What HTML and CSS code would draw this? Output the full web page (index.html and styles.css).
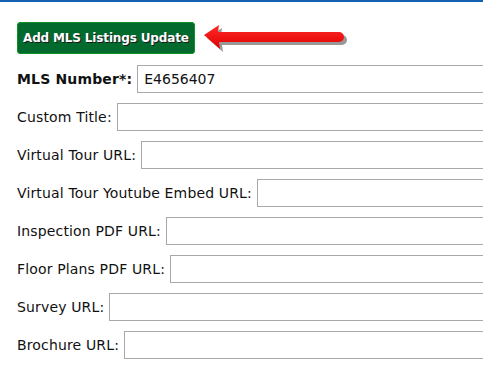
FILE: index.html
```html
<!DOCTYPE html>
<html>
<head>
  <title>Add MLS Listings Update</title>
  <meta name="viewport" content="width=device-width, initial-scale=1.0">
  <link rel="stylesheet" href="styles.css">
</head>
<body>
  <div class="topbar"></div>
  <div class="container">
    <div class="actions">
      <button type="button" class="add-btn">Add MLS Listings Update</button>
      <svg class="arrow" width="150" height="30" viewBox="0 0 150 30">
        <defs>
          <linearGradient id="red" x1="0" y1="0" x2="0" y2="1">
            <stop offset="0" stop-color="#ff2a2a"/>
            <stop offset="1" stop-color="#e00000"/>
          </linearGradient>
        </defs>
        <path d="M3 12 L18 2 L17 9 L138 9 A5 5 0 0 1 138 19 L18 19 L19 26 Z" fill="#444" opacity="0.55" transform="translate(2 2)"/>
        <path d="M2 11 L17 1 L16 8 L137 8 A5 5 0 0 1 137 18 L17 18 L18 25 Z" fill="url(#red)"/>
      </svg>
    </div>
    <form class="mls-form">
      <div class="row">
        <label for="mls" class="strong">MLS Number*:</label>
        <input type="text" id="mls" value="E4656407">
      </div>
      <div class="row">
        <label for="title">Custom Title:</label>
        <input type="text" id="title">
      </div>
      <div class="row">
        <label for="tour">Virtual Tour URL:</label>
        <input type="text" id="tour">
      </div>
      <div class="row">
        <label for="youtube">Virtual Tour Youtube Embed URL:</label>
        <input type="text" id="youtube">
      </div>
      <div class="row">
        <label for="inspection">Inspection PDF URL:</label>
        <input type="text" id="inspection">
      </div>
      <div class="row">
        <label for="floor">Floor Plans PDF URL:</label>
        <input type="text" id="floor">
      </div>
      <div class="row">
        <label for="survey">Survey URL:</label>
        <input type="text" id="survey">
      </div>
      <div class="row">
        <label for="brochure">Brochure URL:</label>
        <input type="text" id="brochure">
      </div>
      <div class="row">
        <label for="feature">Feature On Homepage:</label>
        <select id="feature" class="small-select">
          <option>No</option>
        </select>
      </div>
    </form>
  </div>
</body>
</html>
```

FILE: styles.css
```css
html, body {
  overflow: hidden;
}
body {
  margin: 0;
  padding: 0;
  background-color: #ffffff;
  font-family: "DejaVu Sans", Verdana, sans-serif;
  font-size: 14px;
  letter-spacing: 0.15px;
  color: #111;
}
.topbar {
  height: 2px;
  background-color: #1560b0;
}
.container {
  padding: 20px 0 0 17px;
}
.actions {
  display: flex;
  align-items: center;
  gap: 7px;
  margin-bottom: 11px;
}
.add-btn {
  height: 32px;
  padding: 0 5px;
  background-color: #036a2e;
  border: 1px solid #109025;
  border-radius: 3px;
  color: #ffffff;
  font-family: "DejaVu Sans", Verdana, sans-serif;
  font-weight: bold;
  font-size: 12px;
  letter-spacing: -0.15px;
  text-shadow: 1px 1px 0 #1a1a1a;
  cursor: pointer;
}
.arrow {
  margin-top: 2px;
}
.mls-form {
  display: flex;
  flex-direction: column;
  gap: 10px;
}
.row {
  display: flex;
  align-items: center;
  gap: 5px;
  height: 28px;
}
.row label {
  white-space: nowrap;
}
.row label.strong {
  font-weight: bold;
  letter-spacing: 0.15px;
}
.row input {
  flex: 0 0 420px;
  height: 28px;
  box-sizing: border-box;
  border: 1px solid #a9a9a9;
  padding: 0 6px;
  font-family: "DejaVu Sans", Verdana, sans-serif;
  font-size: 14px;
  color: #111;
}
.small-select {
  width: 46px;
  height: 24px;
  margin-top: 8px;
  border: 1px solid #a9a9a9;
  font-family: "DejaVu Sans", Verdana, sans-serif;
  font-size: 13px;
  background: #fff;
}
```
